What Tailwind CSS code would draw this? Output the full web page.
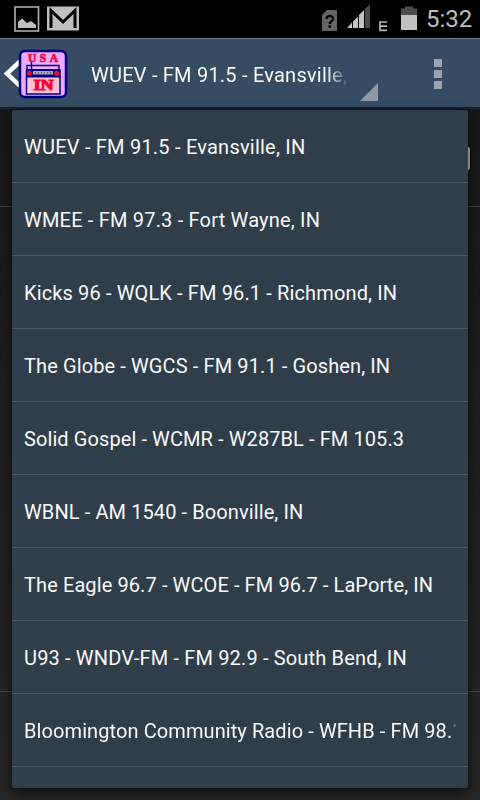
<!DOCTYPE html>
<html lang="en">
<head>
  <meta charset="UTF-8" />
  <meta name="viewport" content="width=device-width, initial-scale=1.0" />
  <title>Indiana Radio Stations</title>
  <script src="https://cdn.jsdelivr.net/npm/@tailwindcss/browser@4"></script>
</head>
<body class="bg-black">
  <div class="relative w-[480px] h-[800px] overflow-hidden flex flex-col bg-black text-[#fafafa] font-['Roboto',sans-serif]">

    <!-- Status bar -->
    <div class="h-[38px] shrink-0 flex items-start justify-between bg-black">
      <svg class="w-[100px] h-[38px]" viewBox="0 0 100 38">
        <path d="M15 7H38.500V31H15Z" fill="none" stroke="#b4b4b4" stroke-width="1.600" />
        <path d="M18 28V22L22 18.500L27 23L31 21L36 25V28Z" fill="#bebebe" />
        <rect x="47" y="6.500" width="32" height="24" fill="#bebebe" />
        <path d="M51 28V10.500L63 22L75 10.500V28" fill="none" stroke="#000" stroke-width="3" />
      </svg>
      <div class="flex items-start">
        <svg class="w-[110px] h-[38px]" viewBox="315 0 110 38">
          <path d="M322 15L327 10H337V31H322Z" fill="#646464" />
          <path d="M326.500 19Q326.500 16 329.700 16Q333 16 333 18.800Q333 20.300 331.200 21.500Q329.700 22.500 329.700 24" fill="none" stroke="#000" stroke-width="2.200" />
          <rect x="328.500" y="25.300" width="2.500" height="2.500" fill="#000" />
          <path d="M347 28L352 22.500V28ZM353 21.500L358 16.500V28H353ZM359 15L364 10V28H359Z" fill="#c4c4c4" />
          <path d="M365 9L370 4V28H365Z" fill="#4c4c4c" />
          <path d="M387 22H380V30.300H387M380 26.200H387" fill="none" stroke="#b4b4b4" stroke-width="1.700" />
          <path d="M401 8.500H405V6.500H413V8.500H417V15H401Z" fill="#4c4c4c" />
          <rect x="401" y="15" width="16" height="15" fill="#c0c0c0" />
        </svg>
        <span class="w-[55px] pl-[1px] text-[24px] leading-[39px] text-[#bebebe]">5:32</span>
      </div>
    </div>

    <!-- Action bar -->
    <div class="h-[71px] shrink-0 flex bg-[#354c63] border-t border-t-[#6b7f91] border-b-2 border-b-[#142330]">
      <svg class="w-[76px] h-[68px]" viewBox="0 39 76 68">
        <path d="M20 61.500L7 73.500L20 86" fill="none" stroke="#fff" stroke-width="4.500" />
        <rect x="20" y="51" width="46" height="46" rx="5" fill="#eeaaff" stroke="#000080" stroke-width="2.500" />
        <text x="28" y="61.500" textLength="30" font-family="Liberation Serif, serif" font-weight="700" font-size="11.500" fill="#ff0033" stroke="#ff0033" stroke-width=".6">USA</text>
        <path d="M31.500 62V70M27 70V65.500H59V70" fill="none" stroke="#000080" stroke-width="1.400" />
        <rect x="26.500" y="70" width="33.500" height="24" fill="#ffc2d5" stroke="#000080" stroke-width="1.500" />
        <rect x="26" y="69" width="34" height="8.500" fill="#000080" />
        <rect x="33" y="71" width="20" height="3.500" fill="#aaaab8" />
        <path d="M35 72.700H51" stroke="#545470" stroke-width="1.500" stroke-dasharray="1 2" />
        <circle cx="29.500" cy="73.300" r="2.500" fill="#ff0033" />
        <circle cx="56.500" cy="73.300" r="2.500" fill="#ff0033" />
        <text x="33.500" y="90" textLength="20" lengthAdjust="spacingAndGlyphs" font-family="Liberation Serif, serif" font-weight="700" font-size="14" fill="#ff0033" stroke="#ff0033" stroke-width="1">IN</text>
      </svg>
      <div class="w-[306px] flex pl-[15px]">
        <div class="w-[257px] overflow-hidden whitespace-nowrap text-[20px] leading-[72px] tracking-[0.22px] mask-[linear-gradient(to_right,black_236px,transparent_258px)]">WUEV - FM 91.5 - Evansville, IN</div>
        <svg class="w-[30px] h-[68px]" viewBox="348 39 30 68">
          <path d="M360 101H378V83Z" fill="#8e9ba6" />
        </svg>
      </div>
      <div class="flex-1 flex flex-col items-center gap-[3px] pt-[20px] pl-[14px]">
        <div class="size-2 bg-[#9aa5b0]"></div>
        <div class="size-2 bg-[#9aa5b0]"></div>
        <div class="size-2 bg-[#9aa5b0]"></div>
      </div>
    </div>

    <!-- Screen behind the dropdown -->
    <div class="flex-1 flex flex-col bg-linear-to-b from-[#181818] to-[#262626]">
      <div class="h-[98px] border-b border-[#404040] flex justify-end pt-[37px] pr-[9px]">
        <div class="w-5 h-[25px] rounded-[3px] bg-[#c4c4c4] border border-black"></div>
      </div>
      <div class="h-[485px] border-b border-[#484848]"></div>
    </div>

    <!-- Station dropdown -->
    <ul class="absolute left-3 top-[110px] w-[456px] h-[678px] overflow-hidden rounded-[2px] bg-[#2e3e4a] shadow-[0_4px_12px_rgba(0,0,0,0.7)] text-[20px] leading-[75px] whitespace-nowrap *:h-[73px] *:px-3 *:border-b *:border-[#4c5a65]">
      <li class="tracking-[0.22px]">WUEV - FM 91.5 - Evansville, IN</li>
      <li class="tracking-[0.19px]">WMEE - FM 97.3 - Fort Wayne, IN</li>
      <li class="tracking-[0.13px]">Kicks 96 - WQLK - FM 96.1 - Richmond, IN</li>
      <li class="tracking-[0.11px]">The Globe - WGCS - FM 91.1 - Goshen, IN</li>
      <li class="tracking-[0.09px]">Solid Gospel - WCMR - W287BL - FM 105.3</li>
      <li class="tracking-[0.1px]">WBNL - AM 1540 - Boonville, IN</li>
      <li class="tracking-[0.1px]">The Eagle 96.7 - WCOE - FM 96.7 - LaPorte, IN</li>
      <li class="tracking-[0.16px]">U93 - WNDV-FM - FM 92.9 - South Bend, IN</li>
      <li class="tracking-[0.09px]"><div class="w-[432px] h-[72px] overflow-hidden mask-[linear-gradient(to_right,black_427px,transparent_433px)]">Bloomington Community Radio - WFHB - FM 98.1</div></li>
    </ul>
  </div>
</body>
</html>
